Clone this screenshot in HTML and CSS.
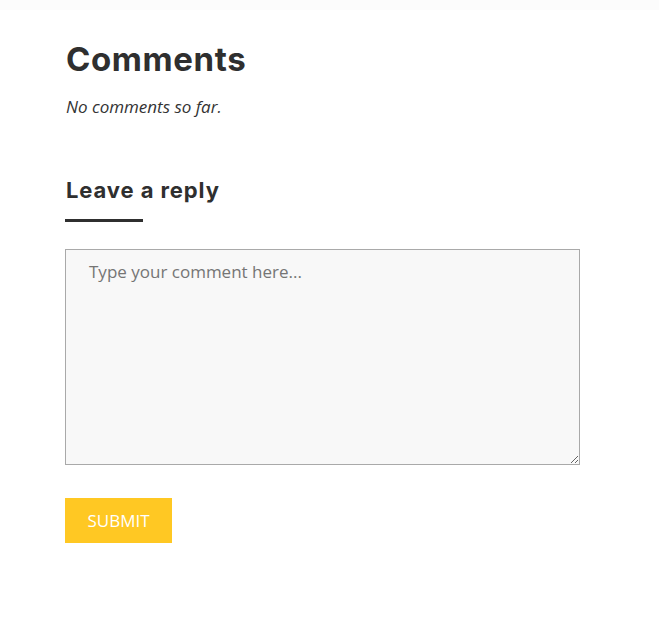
FILE: index.html
```html
<!DOCTYPE html>
<html lang="en">
<head>
    <meta charset="UTF-8">
    <meta name="viewport" content="width=device-width, initial-scale=1.0">
    <title>Comments</title>
    <link rel="stylesheet" href="styles.css">
</head>
<body>
    <div class="top-strip"></div>
    <div class="container">
        <h2 class="comments-title">Comments</h2>
        <p class="no-comments">No comments so far.</p>

        <h3 class="reply-title">Leave a reply</h3>
        <div class="reply-bar"></div>

        <form class="reply-form" onsubmit="return false;">
            <textarea class="comment-box" placeholder="Type your comment here..."></textarea>
            <button type="submit" class="submit-button">SUBMIT</button>
        </form>
    </div>
</body>
</html>
```

FILE: styles.css
```css
* {
    margin: 0;
    padding: 0;
    box-sizing: border-box;
}

body {
    background-color: #FFFFFF;
    color: #2F2F2F;
    font-family: 'Open Sans', sans-serif;
}

.top-strip {
    height: 10px;
    background-color: #FCFCFC;
}

.container {
    padding: 0 79px 0 65px;
}

.comments-title {
    font-family: Inter, 'Noto Sans', sans-serif;
    font-weight: 700;
    font-size: 33px;
    letter-spacing: 0.6px;
    line-height: 40px;
    margin-top: 29px;
    margin-left: 1px;
    color: #2F2F2F;
}

.no-comments {
    font-style: italic;
    font-size: 17px;
    line-height: 24px;
    margin-top: 16px;
    margin-left: 1px;
    color: #333333;
}

.reply-title {
    font-family: Inter, 'Noto Sans', sans-serif;
    font-weight: 700;
    font-size: 22px;
    letter-spacing: 0.9px;
    line-height: 28px;
    margin-top: 57px;
    margin-left: 1px;
    color: #2F2F2F;
}

.reply-bar {
    width: 78px;
    height: 3px;
    background-color: #2F2F2F;
    margin-top: 15px;
}

.comment-box {
    display: block;
    width: 515px;
    height: 216px;
    margin-top: 27px;
    padding: 10px 23px;
    border: 1px solid #A9A9A9;
    background-color: #F8F8F8;
    font-family: 'Open Sans', sans-serif;
    font-size: 17px;
    line-height: 24px;
    color: #333333;
    resize: both;
    outline: none;
}

.comment-box::placeholder {
    color: #757575;
}

.submit-button {
    display: block;
    margin-top: 33px;
    width: 107px;
    height: 45px;
    border: none;
    background-color: #FFC823;
    color: #FFFFFF;
    font-family: 'Open Sans', sans-serif;
    font-size: 17px;
    cursor: pointer;
}
```
